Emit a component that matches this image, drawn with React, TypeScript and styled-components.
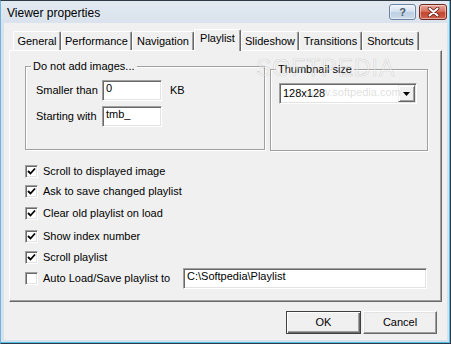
import React from 'react'
import styled, { createGlobalStyle } from 'styled-components'

// Global page reset
const GlobalStyle = createGlobalStyle`
  html, body {
    margin: 0;
    padding: 0;
    background: #ffffff;
  }
  body {
    font-family: 'Liberation Sans', Arial, sans-serif;
    font-size: 11px;
    color: #000;
  }
`

// Window frame
const Window = styled.div`
  box-sizing: border-box;
  width: 451px;
  height: 344px;
  display: flex;
  flex-direction: column;
  background: linear-gradient(#e2e9f1, #d7e1ec 30px, #d7e1ec);
  border: 1px solid #2e3a46;
  border-left-color: #6fb4dc;
  box-shadow: inset -1px -1px 0 #4fbde9;
`

const TitleBar = styled.div`
  height: 22px;
  display: flex;
  align-items: center;
  padding: 0 3px 0 6px;
`

const Title = styled.div`
  flex: 1;
  font-size: 12px;
  line-height: 14px;
  color: #000;
  padding-top: 1px;
`

const CaptionButton = styled.div<{ $w: number; $close?: boolean }>`
  box-sizing: border-box;
  width: ${({ $w }) => $w}px;
  height: 16px;
  margin-left: 3px;
  border-radius: 3px;
  display: flex;
  align-items: center;
  justify-content: center;
  border: 1px solid ${({ $close }) => ($close ? '#6e2a20' : '#6d84a0')};
  background: ${({ $close }) =>
    $close
      ? 'linear-gradient(#e8a89c, #d9715f 45%, #c4442e 55%, #d0624b)'
      : 'linear-gradient(#eef3f9, #d6e2ef 45%, #bccfe4 55%, #cddbea)'};
  box-shadow: inset 0 0 0 1px rgba(255, 255, 255, 0.45);
  font-family: 'Liberation Sans', Arial, sans-serif;
  font-size: 11px;
  font-weight: bold;
  color: #4a5a6c;
`

// Client area
const Client = styled.div`
  flex: 1;
  margin: 0 3px 3px 3px;
  background: #f0f0f0;
  padding: 6px 0 0 5px;
  display: flex;
  flex-direction: column;
`

const TabStrip = styled.div`
  display: flex;
  align-items: flex-end;
  height: 21px;
  padding-left: 4px;
  position: relative;
  z-index: 2;
`

const Tab = styled.div<{ $w: number; $active?: boolean }>`
  box-sizing: border-box;
  width: ${({ $w }) => $w}px;
  height: ${({ $active }) => ($active ? 22 : 19)}px;
  margin-bottom: ${({ $active }) => ($active ? -1 : 0)}px;
  border: 1px solid #ffffff;
  border-bottom: none;
  border-right-color: #696969;
  box-shadow: inset -1px 0 0 #a0a0a0;
  border-radius: 2px 2px 0 0;
  background: #f0f0f0;
  text-align: center;
  padding-top: ${({ $active }) => ($active ? 2 : 3)}px;
  line-height: 13px;
  font-size: 11px;
  white-space: nowrap;
`

const Panel = styled.div`
  box-sizing: border-box;
  width: 433px;
  height: 252px;
  border: 1px solid #ffffff;
  border-right-color: #696969;
  border-bottom-color: #696969;
  box-shadow: inset -1px -1px 0 #a0a0a0;
  position: relative;
  display: flex;
  flex-direction: column;
  padding-left: 15px;
`

const TopRow = styled.div`
  display: flex;
  align-items: flex-start;
`

const GroupBox = styled.div<{ $w: number; $h: number; $top: number; $left?: number }>`
  box-sizing: border-box;
  position: relative;
  width: ${({ $w }) => $w}px;
  height: ${({ $h }) => $h}px;
  margin-top: ${({ $top }) => $top}px;
  margin-left: ${({ $left }) => $left ?? 0}px;
  border: 1px solid #a0a0a0;
  box-shadow: inset 1px 1px 0 #ffffff, 1px 1px 0 #ffffff;
`

const Legend = styled.div`
  position: absolute;
  top: -7px;
  left: 5px;
  padding: 0 2px;
  background: #f0f0f0;
  line-height: 13px;
  white-space: nowrap;
`

const GroupBody = styled.div<{ $pt: number; $pl: number }>`
  display: flex;
  flex-direction: column;
  gap: 5px;
  padding: ${({ $pt, $pl }) => `${$pt}px 0 0 ${$pl}px`};
`

const FieldRow = styled.div`
  display: flex;
  align-items: center;
  height: 21px;
`

const FieldLabel = styled.div<{ $w: number }>`
  width: ${({ $w }) => $w}px;
  line-height: 13px;
  white-space: nowrap;
`

const TextBox = styled.div<{ $w: number }>`
  box-sizing: border-box;
  width: ${({ $w }) => $w}px;
  height: 21px;
  background: #ffffff;
  border: 1px solid;
  border-color: #a0a0a0 #ffffff #ffffff #a0a0a0;
  box-shadow: inset 1px 1px 0 #696969, inset -1px -1px 0 #e3e3e3;
  padding: 1px 0 0 3px;
  line-height: 13px;
  white-space: nowrap;
`

const Unit = styled.div`
  margin-left: 8px;
  line-height: 13px;
`

const Combo = styled.div`
  box-sizing: border-box;
  width: 138px;
  height: 21px;
  background: #ffffff;
  border: 1px solid;
  border-color: #a0a0a0 #ffffff #ffffff #a0a0a0;
  box-shadow: inset 1px 1px 0 #696969, inset -1px -1px 0 #e3e3e3;
  display: flex;
  align-items: center;
  padding: 1px 1px 1px 3px;
`

const ComboText = styled.div`
  flex: 1;
  line-height: 13px;
`

const DropButton = styled.div`
  box-sizing: border-box;
  width: 17px;
  height: 17px;
  background: #f0f0f0;
  border: 1px solid;
  border-color: #f0f0f0 #696969 #696969 #f0f0f0;
  box-shadow: inset 1px 1px 0 #ffffff, inset -1px -1px 0 #a0a0a0;
  display: flex;
  align-items: center;
  justify-content: center;
`

const CheckRow = styled.div<{ $mt: number; $h?: number }>`
  display: flex;
  align-items: center;
  height: ${({ $h }) => $h ?? 16}px;
  margin-top: ${({ $mt }) => $mt}px;
`

const CheckBox = styled.div`
  box-sizing: border-box;
  width: 13px;
  height: 13px;
  flex: none;
  background: #ffffff;
  border: 1px solid;
  border-color: #a0a0a0 #ffffff #ffffff #a0a0a0;
  box-shadow: inset 1px 1px 0 #696969, inset -1px -1px 0 #e3e3e3;
  display: flex;
  align-items: center;
  justify-content: center;
`

const CheckLabel = styled.div<{ $w?: number }>`
  margin-left: 5px;
  line-height: 13px;
  white-space: nowrap;
  width: ${({ $w }) => ($w ? `${$w}px` : 'auto')};
`

const ButtonRow = styled.div`
  box-sizing: border-box;
  width: 433px;
  display: flex;
  justify-content: flex-end;
  gap: 2px;
  padding-right: 5px;
  margin-top: 9px;
`

const PushButton = styled.div<{ $w: number; $default?: boolean }>`
  box-sizing: border-box;
  width: ${({ $w }) => $w}px;
  height: 23px;
  display: flex;
  align-items: center;
  justify-content: center;
  background: #f0f0f0;
  border: 1px solid;
  border-color: ${({ $default }) => ($default ? '#404040' : '#ffffff #696969 #696969 #ffffff')};
  box-shadow: ${({ $default }) =>
    $default
      ? 'inset 1px 1px 0 #ffffff, inset -1px -1px 0 #696969, inset -2px -2px 0 #a0a0a0'
      : 'inset -1px -1px 0 #a0a0a0, inset 1px 1px 0 #e3e3e3'};
  line-height: 13px;
`

// faint site watermark lying over the panel
const Watermark = styled.div`
  position: absolute;
  left: 246px;
  top: 4px;
  font-family: 'Liberation Sans', Arial, sans-serif;
  font-size: 23px;
  letter-spacing: 1px;
  color: rgba(255, 255, 255, 0.35);
  -webkit-text-stroke: 0.6px rgba(150, 150, 150, 0.35);
  pointer-events: none;
  white-space: nowrap;
`

const WatermarkUrl = styled.div`
  position: absolute;
  left: 296px;
  top: 35px;
  font-size: 11px;
  color: rgba(160, 160, 160, 0.35);
  pointer-events: none;
`

const Check = () => (
  <svg width="9" height="9" viewBox="0 0 9 9">
    <path d="M1 4 L3.5 6.5 L8 1.5" fill="none" stroke="#000" strokeWidth="1.8" />
  </svg>
)

const HelpIcon = () => <span>?</span>

const CloseIcon = () => (
  <svg width="13" height="10" viewBox="0 0 13 10">
    <path d="M2.5 1.5 L10.5 8.5 M10.5 1.5 L2.5 8.5" stroke="#5a2018" strokeWidth="3.6" strokeLinecap="round" />
    <path d="M2.5 1.5 L10.5 8.5 M10.5 1.5 L2.5 8.5" stroke="#ffffff" strokeWidth="2" strokeLinecap="round" />
  </svg>
)

const tabs = [
  { label: 'General', w: 48 },
  { label: 'Performance', w: 71 },
  { label: 'Navigation', w: 62 },
  { label: 'Playlist', w: 47, active: true },
  { label: 'Slideshow', w: 58 },
  { label: 'Transitions', w: 63 },
  { label: 'Shortcuts', w: 57 },
]

const options = [
  { label: 'Scroll to displayed image', mt: 12 },
  { label: 'Ask to save changed playlist', mt: 4 },
  { label: 'Clear old playlist on load', mt: 6 },
  { label: 'Show index number', mt: 7 },
  { label: 'Scroll playlist', mt: 5 },
]

const App: React.FC = () => {
  return (
    <>
      <GlobalStyle />
      <Window>
        <TitleBar>
          <Title>Viewer properties</Title>
          <CaptionButton $w={27}>
            <HelpIcon />
          </CaptionButton>
          <CaptionButton $w={28} $close>
            <CloseIcon />
          </CaptionButton>
        </TitleBar>
        <Client>
          <TabStrip>
            {tabs.map((t) => (
              <Tab key={t.label} $w={t.w} $active={t.active}>
                {t.label}
              </Tab>
            ))}
          </TabStrip>
          <Panel>
            <TopRow>
              <GroupBox $w={240} $h={84} $top={15}>
                <Legend>Do not add images...</Legend>
                <GroupBody $pt={13} $pl={10}>
                  <FieldRow>
                    <FieldLabel $w={66}>Smaller than</FieldLabel>
                    <TextBox $w={60}>0</TextBox>
                    <Unit>KB</Unit>
                  </FieldRow>
                  <FieldRow>
                    <FieldLabel $w={66}>Starting with</FieldLabel>
                    <TextBox $w={60}>tmb_</TextBox>
                  </FieldRow>
                </GroupBody>
              </GroupBox>
              <GroupBox $w={158} $h={82} $top={18} $left={5}>
                <Legend>Thumbnail size</Legend>
                <GroupBody $pt={13} $pl={8}>
                  <Combo>
                    <ComboText>128x128</ComboText>
                    <DropButton>
                      <svg width="7" height="4" viewBox="0 0 7 4">
                        <path d="M0 0 H7 L3.5 4 Z" fill="#000" />
                      </svg>
                    </DropButton>
                  </Combo>
                </GroupBody>
              </GroupBox>
            </TopRow>

            {options.map((o) => (
              <CheckRow key={o.label} $mt={o.mt}>
                <CheckBox>
                  <Check />
                </CheckBox>
                <CheckLabel>{o.label}</CheckLabel>
              </CheckRow>
            ))}
            <CheckRow $mt={2} $h={22}>
              <CheckBox />
              <CheckLabel $w={140}>Auto Load/Save playlist to</CheckLabel>
              <TextBox $w={244}>C:\Softpedia\Playlist</TextBox>
            </CheckRow>

            <Watermark>SOFTPEDIA</Watermark>
            <WatermarkUrl>www.softpedia.com</WatermarkUrl>
          </Panel>
          <ButtonRow>
            <PushButton $w={75} $default>
              OK
            </PushButton>
            <PushButton $w={74}>Cancel</PushButton>
          </ButtonRow>
        </Client>
      </Window>
    </>
  )
}

export default App
